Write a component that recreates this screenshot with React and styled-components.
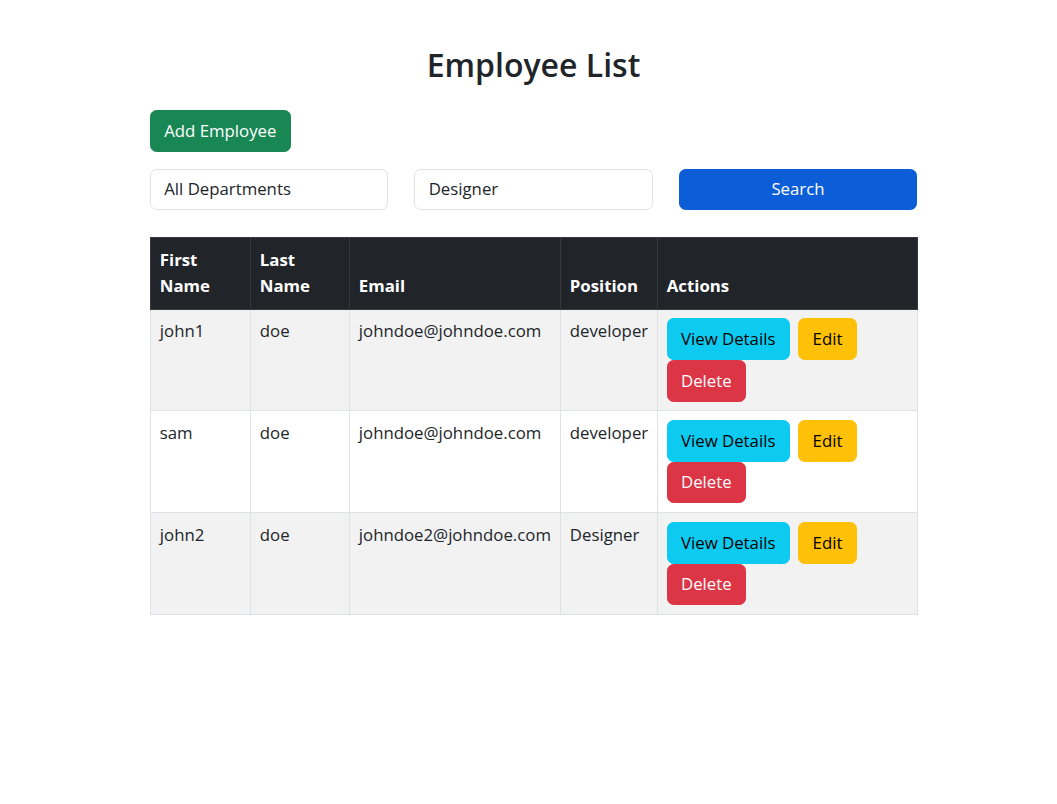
import styled, { createGlobalStyle } from "styled-components";

const GlobalStyle = createGlobalStyle`
  body {
    margin: 0;
    background: #ffffff;
    color: #212529;
    font-family: "Open Sans", "Noto Sans", sans-serif;
    font-size: 16.8px;
    line-height: 26.4px;
  }
  * { box-sizing: border-box; }
`;

const Container = styled.div`
  width: 777px;
  margin: 0 auto;
  padding: 41px 0 0 10px;
`;

const Title = styled.h1`
  margin: 0 0 21px;
  text-align: center;
  font-size: 32px;
  line-height: 48px;
  font-weight: 600;
`;

const Button = styled.button`
  display: inline-block;
  font-family: inherit;
  font-size: 16.8px;
  line-height: 26.4px;
  padding: 6.6px 13.2px;
  border: 1px solid ${(p) => p.$bg};
  border-radius: 6.6px;
  background: ${(p) => p.$bg};
  color: ${(p) => p.$fg || "#ffffff"};
  margin-right: ${(p) => (p.$gap ? "8.8px" : "0")};
  cursor: pointer;
`;

const Toolbar = styled.div`
  margin-bottom: 17px;
`;

const FilterRow = styled.div`
  display: grid;
  grid-template-columns: repeat(3, 1fr);
  column-gap: 26.4px;
  margin-bottom: 27px;
`;

const Input = styled.input`
  font-family: inherit;
  font-size: 16.8px;
  line-height: 26.4px;
  padding: 6.6px 13.2px;
  border: 1px solid #dee2e6;
  border-radius: 6.6px;
  color: #212529;
  width: 100%;
  background: #fff;
  outline: none;
`;

const Table = styled.table`
  width: 767px;
  border-collapse: collapse;
  table-layout: fixed;
  border: 1px solid #dee2e6;
`;

const Th = styled.th`
  background: #212529;
  color: #ffffff;
  font-weight: 700;
  text-align: left;
  vertical-align: bottom;
  padding: 8.8px;
  border: 1px solid #373b3e;
`;

const Row = styled.tr`
  background: ${(p) => (p.$striped ? "#f2f2f2" : "#ffffff")};
`;

const Td = styled.td`
  vertical-align: top;
  padding: 8.8px;
  border: 1px solid #dee2e6;
`;

const employees = [
  { first: "john1", last: "doe", email: "johndoe@johndoe.com", position: "developer" },
  { first: "sam", last: "doe", email: "johndoe@johndoe.com", position: "developer" },
  { first: "john2", last: "doe", email: "johndoe2@johndoe.com", position: "Designer" },
];

export default function App() {
  return (
    <>
      <GlobalStyle />
      <Container>
        <Title>Employee List</Title>
        <Toolbar>
          <Button $bg="#198754">Add Employee</Button>
        </Toolbar>
        <FilterRow>
          <Input readOnly value="All Departments" />
          <Input readOnly value="Designer" />
          <Button $bg="#0b5ed7">Search</Button>
        </FilterRow>
        <Table>
          <colgroup>
            <col style={{ width: 100 }} />
            <col style={{ width: 99 }} />
            <col style={{ width: 211 }} />
            <col style={{ width: 97 }} />
            <col style={{ width: 260 }} />
          </colgroup>
          <thead>
            <tr>
              <Th>First Name</Th>
              <Th>Last Name</Th>
              <Th>Email</Th>
              <Th>Position</Th>
              <Th>Actions</Th>
            </tr>
          </thead>
          <tbody>
            {employees.map((e, i) => (
              <Row key={i} $striped={i % 2 === 0}>
                <Td>{e.first}</Td>
                <Td>{e.last}</Td>
                <Td>{e.email}</Td>
                <Td>{e.position}</Td>
                <Td>
                  <Button $bg="#0dcaf0" $fg="#000000" $gap>View Details</Button>
                  <Button $bg="#ffc107" $fg="#000000" $gap>Edit</Button>
                  <Button $bg="#dc3545" $gap>Delete</Button>
                </Td>
              </Row>
            ))}
          </tbody>
        </Table>
      </Container>
    </>
  );
}
